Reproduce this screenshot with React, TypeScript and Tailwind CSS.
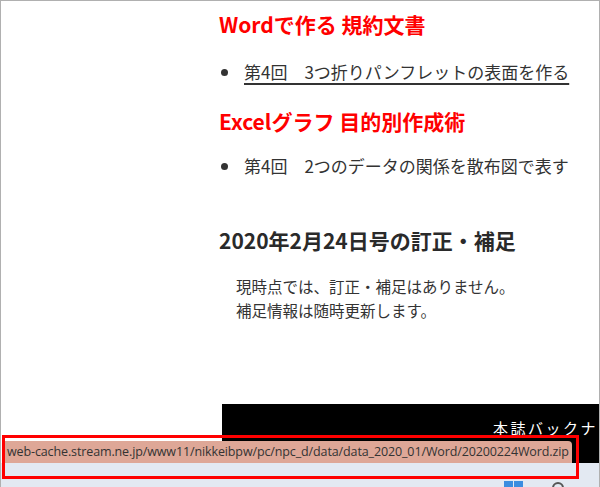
import React from "react";

const jp = { fontFamily: '"Noto Sans CJK JP", "Noto Sans", sans-serif' };

function Bullet({ children, link }: { children: React.ReactNode; link?: boolean }) {
  return (
    <li className="flex items-center h-[26px]">
      <span className="w-[7px] h-[7px] rounded-full bg-[#333] ml-[2px] mr-[16px]" />
      <span
        className={
          "text-[17px] text-[#333] " +
          (link ? "underline underline-offset-[4px] decoration-[1.5px]" : "")
        }
      >
        {children}
      </span>
    </li>
  );
}

export default function App() {
  return (
    <div
      className="relative w-[600px] h-[487px] overflow-hidden bg-white border-t border-l border-r border-[#b0b0b0]"
      style={jp}
    >
      <div className="flex flex-col pl-[218px]">
        <h2 className="mt-[8px] h-[30px] leading-[30px] text-[21px] font-bold text-[#ff0000]">
          Wordで作る 規約文書
        </h2>
        <ul className="mt-[20px]">
          <Bullet link>第4回　3つ折りパンフレットの表面を作る</Bullet>
        </ul>
        <h2 className="mt-[21px] h-[30px] leading-[30px] text-[21px] font-bold text-[#ff0000]">
          Excelグラフ 目的別作成術
        </h2>
        <ul className="mt-[17px]">
          <Bullet>第4回　2つのデータの関係を散布図で表す</Bullet>
        </ul>
        <h2 className="mt-[46px] h-[30px] leading-[30px] text-[21px] font-bold text-[#2a2a2a]">
          2020年2月24日号の訂正・補足
        </h2>
        <div className="mt-[19px] pl-[17px] text-[15.5px] leading-[24px] text-[#333]">
          <p>現時点では、訂正・補足はありません。</p>
          <p>補足情報は随時更新します。</p>
        </div>
        <div className="mt-[82px] ml-[3px] h-[60px] bg-black pt-[13px] pl-[271px] overflow-hidden">
          <p className="text-white text-[15px] leading-[22px] tracking-[2.5px] whitespace-nowrap">
            本誌バックナ
          </p>
        </div>
      </div>

      {/* taskbar strip */}
      <div className="absolute left-0 right-0 top-[462px] bottom-0 bg-[#e3e9f2]">
        <div className="absolute left-[503px] top-[18px] grid grid-cols-2 gap-[1px]">
          <span className="w-[9px] h-[9px] bg-[#3b8de0]" />
          <span className="w-[9px] h-[9px] bg-[#3b8de0]" />
          <span className="w-[9px] h-[9px] bg-[#3b8de0]" />
          <span className="w-[9px] h-[9px] bg-[#3b8de0]" />
        </div>
        <div className="absolute left-[551px] top-[19px] w-[12px] h-[12px] rounded-full border-[2px] border-[#555]" />
      </div>

      {/* status bar url */}
      <div
        className="absolute left-[3px] top-[440px] w-[568px] h-[22px] bg-[#dea797] rounded-tr-[4px] flex items-center pl-[3px] text-[12.5px] text-[#333] whitespace-nowrap overflow-hidden"
        style={{ fontFamily: '"Open Sans", "Noto Sans", sans-serif', letterSpacing: "-0.12px" }}
      >
        web-cache.stream.ne.jp/www11/nikkeibpw/pc/npc_d/data/data_2020_01/Word/20200224Word.zip
      </div>

      {/* annotation box */}
      <div className="absolute left-[1px] top-[434px] w-[577px] h-[44px] border-[3px] border-[#ff0000]" />
    </div>
  );
}
